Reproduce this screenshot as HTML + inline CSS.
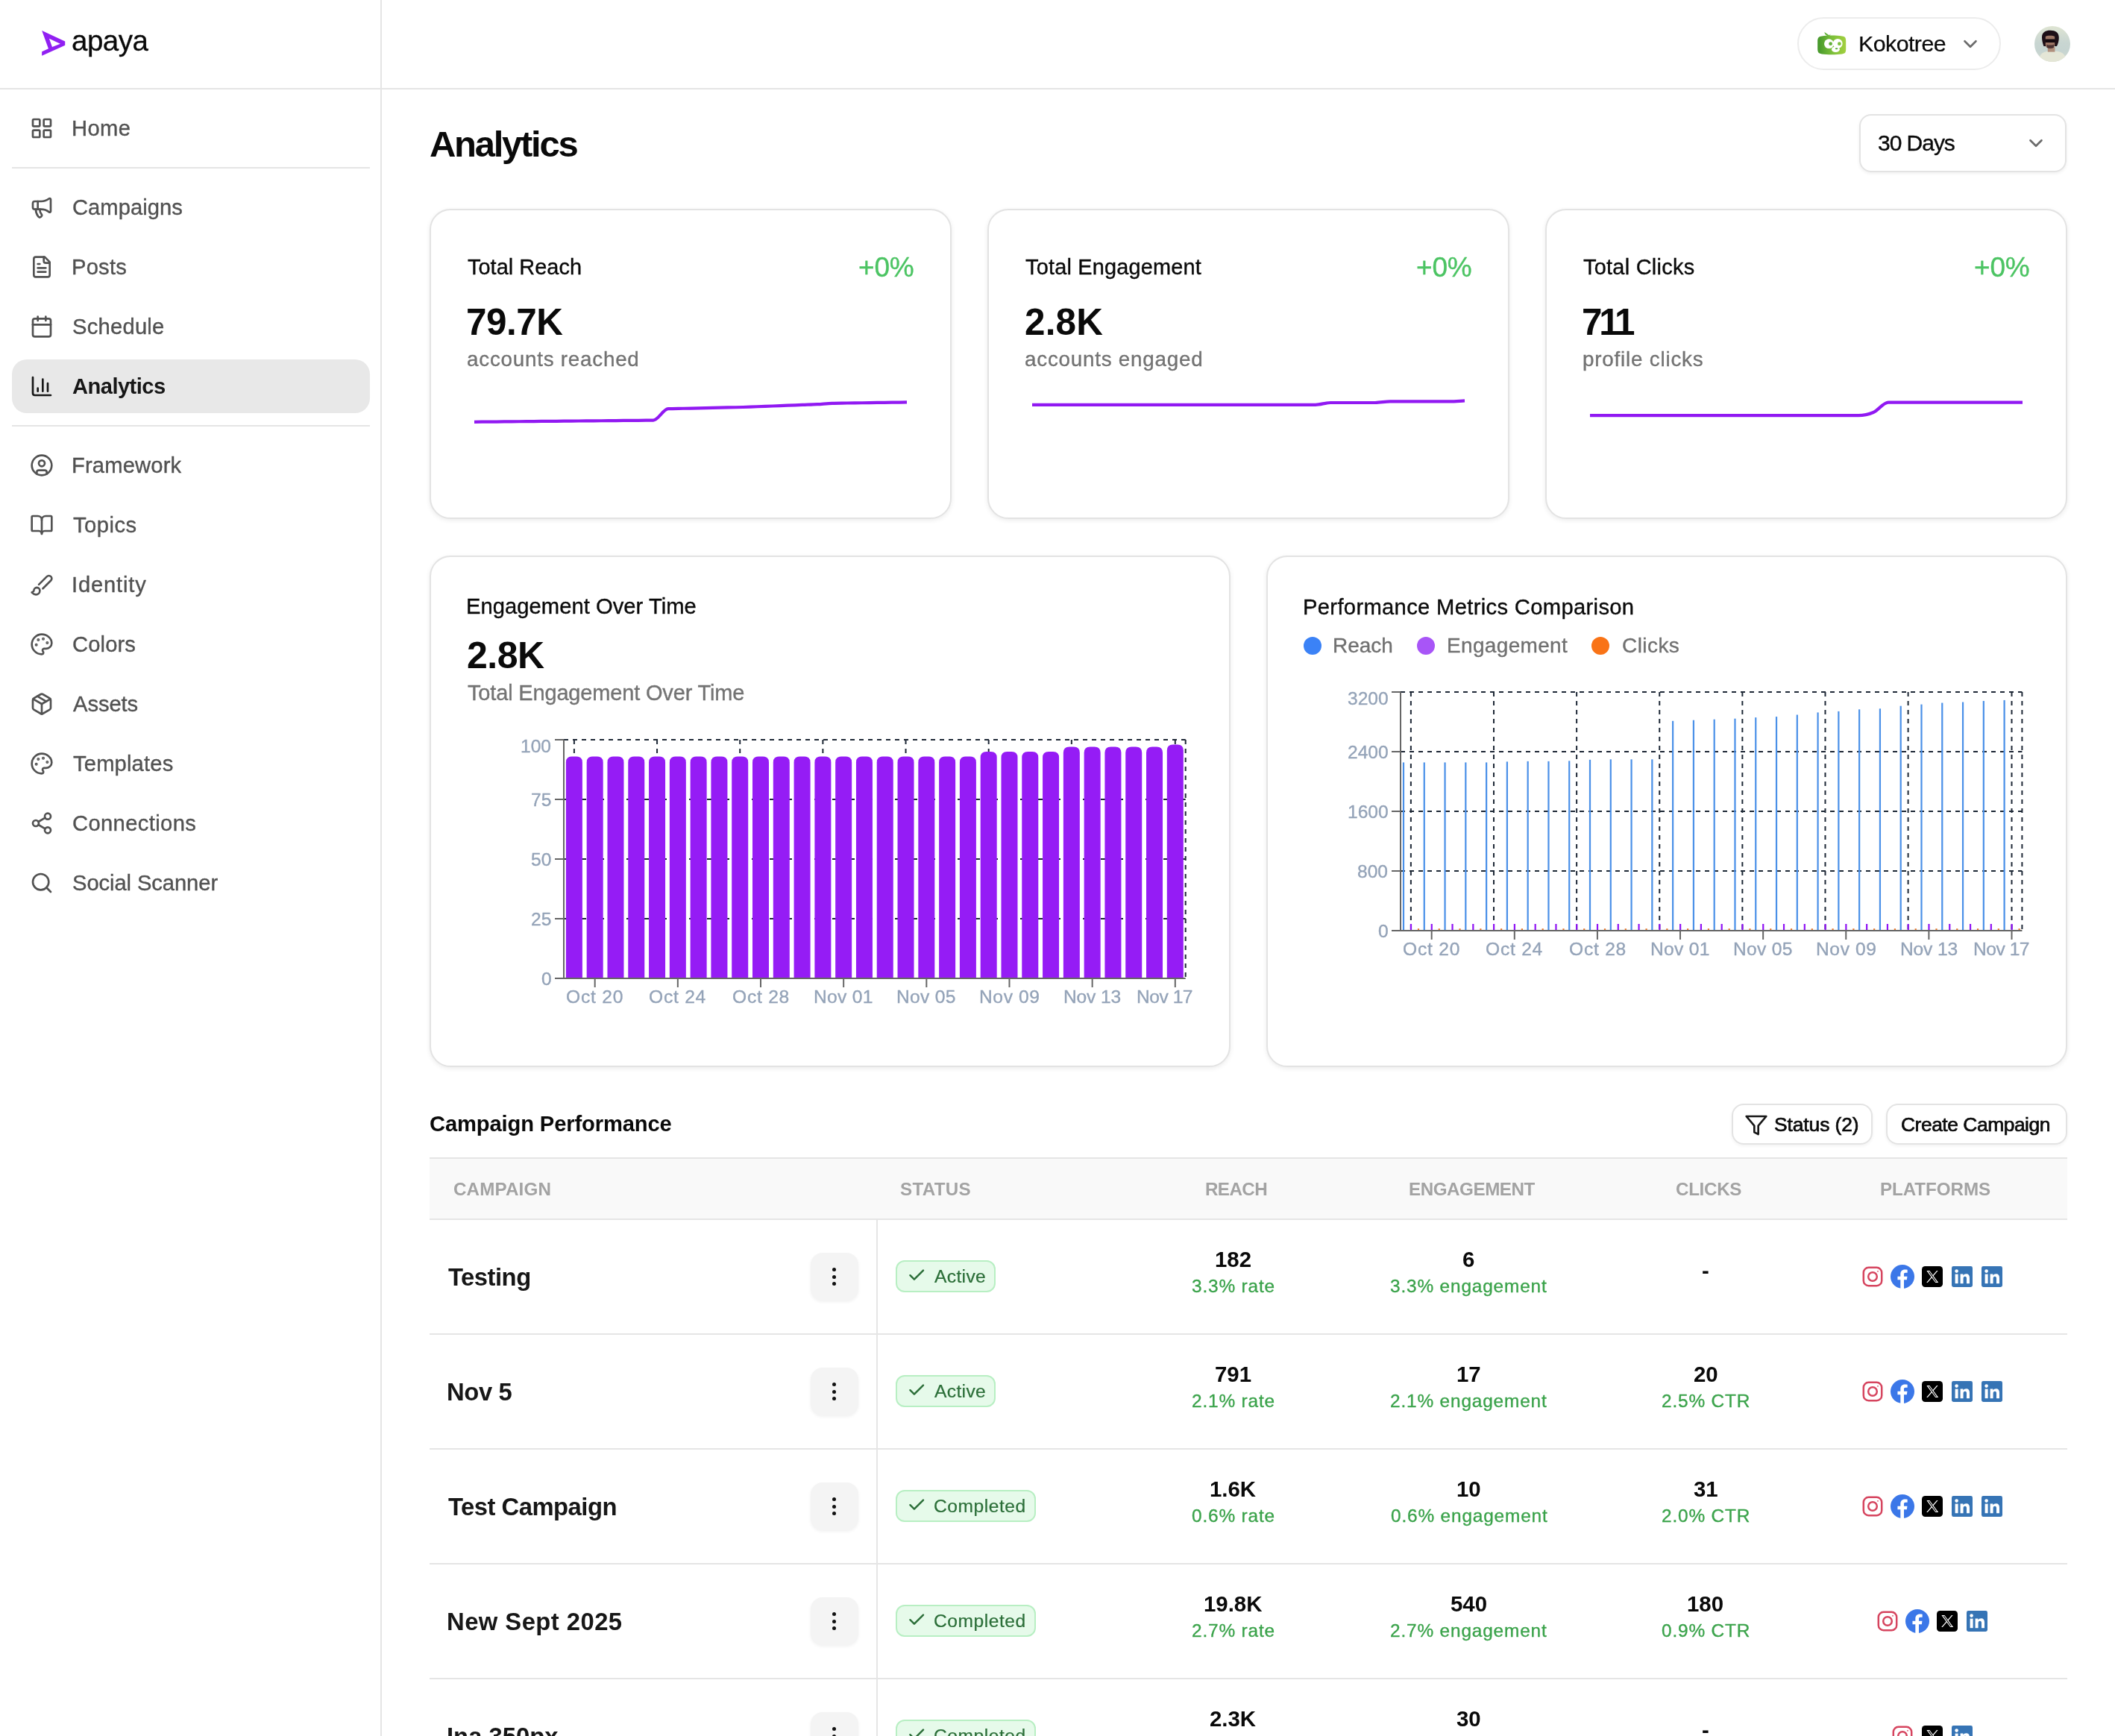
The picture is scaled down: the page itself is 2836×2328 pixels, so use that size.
<!DOCTYPE html>
<html><head><meta charset="utf-8"><title>Analytics</title>
<style>
html,body{margin:0;padding:0;background:#fff;overflow:hidden}
#root{zoom:2;position:relative;width:1418px;height:1164px;overflow:hidden;background:#fff;font-family:'Liberation Sans', sans-serif}
.t{position:absolute;white-space:nowrap;font-family:'Liberation Sans', sans-serif;will-change:transform}
</style></head><body><div id="root">
<div style="position:absolute;left:255px;top:0px;width:1px;height:1164px;background:#e5e5e5"></div>
<div style="position:absolute;left:0px;top:59px;width:1418px;height:1px;background:#e5e5e5"></div>
<svg style="position:absolute;left:0;top:0" width="60" height="60" viewBox="0 0 60 60"><path fill="#9120f2" fill-rule="evenodd" d="M28.08 20.53 L43.62 27.77 L43.62 30.32 L28.08 37.34 L28.08 34.57 L32.47 32.66 Z M32.98 25.85 L40.43 29.38 L34.98 31.51 Z"/></svg>
<div style="position:absolute;left:8px;top:112px;width:240px;height:1px;background:#e5e5e5"></div>
<div style="position:absolute;left:8px;top:285px;width:240px;height:1px;background:#e5e5e5"></div>
<div style="position:absolute;left:8px;top:241px;width:240px;height:36px;background:#e8e8e8;border-radius:10px"></div>
<svg style="position:absolute;left:20px;top:78px" width="16" height="16" viewBox="0 0 24 24" fill="none" stroke="#525252" stroke-width="2" stroke-linecap="round" stroke-linejoin="round" color="#525252" ><rect width="7" height="7" x="3" y="3" rx="1"/><rect width="7" height="7" x="14" y="3" rx="1"/><rect width="7" height="7" x="14" y="14" rx="1"/><rect width="7" height="7" x="3" y="14" rx="1"/></svg>
<svg style="position:absolute;left:20px;top:131px" width="16" height="16" viewBox="0 0 24 24" fill="none" stroke="#525252" stroke-width="2" stroke-linecap="round" stroke-linejoin="round" color="#525252" ><path d="M11 6a13 13 0 0 0 8.4-2.8A1 1 0 0 1 21 4v12a1 1 0 0 1-1.6.8A13 13 0 0 0 11 14H5a2 2 0 0 1-2-2V8a2 2 0 0 1 2-2z"/><path d="M6 14a12 12 0 0 0 2.4 7.2 2 2 0 0 0 3.2-2.4A8 8 0 0 1 10 14"/><path d="M8 6v8"/></svg>
<svg style="position:absolute;left:20px;top:171px" width="16" height="16" viewBox="0 0 24 24" fill="none" stroke="#525252" stroke-width="2" stroke-linecap="round" stroke-linejoin="round" color="#525252" ><path d="M15 2H6a2 2 0 0 0-2 2v16a2 2 0 0 0 2 2h12a2 2 0 0 0 2-2V7Z"/><path d="M14 2v4a2 2 0 0 0 2 2h4"/><path d="M10 9H8"/><path d="M16 13H8"/><path d="M16 17H8"/></svg>
<svg style="position:absolute;left:20px;top:211px" width="16" height="16" viewBox="0 0 24 24" fill="none" stroke="#525252" stroke-width="2" stroke-linecap="round" stroke-linejoin="round" color="#525252" ><path d="M8 2v4"/><path d="M16 2v4"/><rect width="18" height="18" x="3" y="4" rx="2"/><path d="M3 10h18"/></svg>
<svg style="position:absolute;left:20px;top:251px" width="16" height="16" viewBox="0 0 24 24" fill="none" stroke="#171717" stroke-width="2" stroke-linecap="round" stroke-linejoin="round" color="#171717" ><path d="M3 3v16a2 2 0 0 0 2 2h16"/><path d="M18 17V9"/><path d="M13 17V5"/><path d="M8 17v-3"/></svg>
<svg style="position:absolute;left:20px;top:304px" width="16" height="16" viewBox="0 0 24 24" fill="none" stroke="#525252" stroke-width="2" stroke-linecap="round" stroke-linejoin="round" color="#525252" ><circle cx="12" cy="12" r="10"/><circle cx="12" cy="10" r="3"/><path d="M7 20.662V19a2 2 0 0 1 2-2h6a2 2 0 0 1 2 2v1.662"/></svg>
<svg style="position:absolute;left:20px;top:344px" width="16" height="16" viewBox="0 0 24 24" fill="none" stroke="#525252" stroke-width="2" stroke-linecap="round" stroke-linejoin="round" color="#525252" ><path d="M12 7v14"/><path d="M3 18a1 1 0 0 1-1-1V4a1 1 0 0 1 1-1h5a4 4 0 0 1 4 4 4 4 0 0 1 4-4h5a1 1 0 0 1 1 1v13a1 1 0 0 1-1 1h-6a3 3 0 0 0-3 3 3 3 0 0 0-3-3z"/></svg>
<svg style="position:absolute;left:20px;top:384px" width="16" height="16" viewBox="0 0 24 24" fill="none" stroke="#525252" stroke-width="2" stroke-linecap="round" stroke-linejoin="round" color="#525252" ><path d="m9.06 11.9 8.07-8.06a2.85 2.85 0 1 1 4.03 4.03l-8.06 8.08"/><path d="M7.07 14.94c-1.66 0-3 1.35-3 3.02 0 1.33-2.5 1.52-2 2.02 1.08 1.1 2.49 2.02 4 2.02 2.2 0 4-1.8 4-4.04a3.01 3.01 0 0 0-3-3.02z"/></svg>
<svg style="position:absolute;left:20px;top:424px" width="16" height="16" viewBox="0 0 24 24" fill="none" stroke="#525252" stroke-width="2" stroke-linecap="round" stroke-linejoin="round" color="#525252" ><circle cx="13.5" cy="6.5" r=".5" fill="currentColor"/><circle cx="17.5" cy="10.5" r=".5" fill="currentColor"/><circle cx="8.5" cy="7.5" r=".5" fill="currentColor"/><circle cx="6.5" cy="12.5" r=".5" fill="currentColor"/><path d="M12 2C6.5 2 2 6.5 2 12s4.5 10 10 10c.926 0 1.648-.746 1.648-1.688 0-.437-.18-.835-.437-1.125-.29-.289-.438-.652-.438-1.125a1.64 1.64 0 0 1 1.668-1.668h1.996c3.051 0 5.555-2.503 5.555-5.554C21.965 6.012 17.461 2 12 2z"/></svg>
<svg style="position:absolute;left:20px;top:464px" width="16" height="16" viewBox="0 0 24 24" fill="none" stroke="#525252" stroke-width="2" stroke-linecap="round" stroke-linejoin="round" color="#525252" ><path d="M11 21.73a2 2 0 0 0 2 0l7-4A2 2 0 0 0 21 16V8a2 2 0 0 0-1-1.73l-7-4a2 2 0 0 0-2 0l-7 4A2 2 0 0 0 3 8v8a2 2 0 0 0 1 1.73z"/><path d="M12 22V12"/><path d="m3.3 7 8.7 5 8.7-5"/><path d="m7.5 4.27 9 5.15"/></svg>
<svg style="position:absolute;left:20px;top:504px" width="16" height="16" viewBox="0 0 24 24" fill="none" stroke="#525252" stroke-width="2" stroke-linecap="round" stroke-linejoin="round" color="#525252" ><circle cx="13.5" cy="6.5" r=".5" fill="currentColor"/><circle cx="17.5" cy="10.5" r=".5" fill="currentColor"/><circle cx="8.5" cy="7.5" r=".5" fill="currentColor"/><circle cx="6.5" cy="12.5" r=".5" fill="currentColor"/><path d="M12 2C6.5 2 2 6.5 2 12s4.5 10 10 10c.926 0 1.648-.746 1.648-1.688 0-.437-.18-.835-.437-1.125-.29-.289-.438-.652-.438-1.125a1.64 1.64 0 0 1 1.668-1.668h1.996c3.051 0 5.555-2.503 5.555-5.554C21.965 6.012 17.461 2 12 2z"/></svg>
<svg style="position:absolute;left:20px;top:544px" width="16" height="16" viewBox="0 0 24 24" fill="none" stroke="#525252" stroke-width="2" stroke-linecap="round" stroke-linejoin="round" color="#525252" ><circle cx="18" cy="5" r="3"/><circle cx="6" cy="12" r="3"/><circle cx="18" cy="19" r="3"/><line x1="8.59" x2="15.42" y1="13.51" y2="17.49"/><line x1="15.41" x2="8.59" y1="6.51" y2="10.49"/></svg>
<svg style="position:absolute;left:20px;top:584px" width="16" height="16" viewBox="0 0 24 24" fill="none" stroke="#525252" stroke-width="2" stroke-linecap="round" stroke-linejoin="round" color="#525252" ><circle cx="11" cy="11" r="8"/><path d="m21 21-4.3-4.3"/></svg>
<div style="position:absolute;left:1205.1px;top:11.6px;width:136.3px;height:35.6px;border:1px solid #ececec;border-radius:999px;box-sizing:border-box"></div>
<svg style="position:absolute;left:1217px;top:20px" width="22" height="18" viewBox="0 0 22 18"><defs><linearGradient id="kg" x1="0" y1="0" x2="1" y2="0"><stop offset="0" stop-color="#43962a"/><stop offset="0.5" stop-color="#7bbf3a"/><stop offset="1" stop-color="#a3d03f"/></linearGradient></defs><path d="M6.2 1.5 C6.3 3 7.3 3.8 8.4 4.1 L9.6 4.1 C9.9 3.5 10.3 3 10.8 2.6 L9.3 3.6 Z" fill="#62b13a"/><path d="M4.5 4.2 C8 3.6 14 3.6 18 4.2 C20 4.4 20.6 5.2 20.6 7.5 L20.6 12.8 C20.6 15.3 20 16 18 16.2 C14 16.7 8 16.7 4.5 16.2 C2.5 16 1.6 15.3 1.6 12.8 L1.6 7.5 C1.6 5.2 2.5 4.4 4.5 4.2 Z" fill="url(#kg)"/><circle cx="9.2" cy="9.35" r="3.2" fill="#fff"/><circle cx="15.1" cy="9.2" r="3.2" fill="#fff"/><ellipse cx="13.7" cy="13.1" rx="2.7" ry="1.9" fill="#fff"/><circle cx="10.3" cy="9.35" r="1.2" fill="#62b13a"/><circle cx="16.2" cy="9.35" r="1.2" fill="#7cc03c"/><ellipse cx="14.3" cy="12.6" rx="0.9" ry="0.5" fill="#55a834"/></svg>
<svg style="position:absolute;left:1313.5px;top:22.1px" width="15" height="15" viewBox="0 0 24 24" fill="none" stroke="#6b6b6b" stroke-width="2.1" stroke-linecap="round" stroke-linejoin="round" color="#6b6b6b" ><path d="m6 9 6 6 6-6"/></svg>
<svg style="position:absolute;left:1364px;top:17.5px" width="24" height="24" viewBox="0 0 24 24"><defs><clipPath id="avc"><circle cx="12" cy="12" r="12"/></clipPath><linearGradient id="avg" x1="0" y1="0" x2="0" y2="1"><stop offset="0" stop-color="#dfe5d3"/><stop offset="0.45" stop-color="#c9d6d2"/><stop offset="0.7" stop-color="#c6d4d1"/><stop offset="1" stop-color="#d5dcd0"/></linearGradient></defs><g clip-path="url(#avc)"><rect width="24" height="24" fill="url(#avg)"/><path d="M3 24 C3 18 6 16.8 12 16.6 C18 16.8 21 18 21.5 24 Z" fill="#e4e6d6"/><rect x="8.9" y="14" width="4.8" height="3.3" fill="#b08f7c"/><path d="M5 7.5 C5 3.8 8 2.8 10.8 2.9 C14 2.9 16.4 4.3 16.4 7.8 C16.4 10 15.8 12 15 13.5 L6.2 13.5 C5.5 11.5 5 9.5 5 7.5 Z" fill="#1d0f17"/><path d="M7.4 7 C8 6.2 12.5 6 13.6 7 L13.6 12.8 C13.3 14.6 12.2 15.2 10.5 15.2 C8.8 15.2 7.6 14.4 7.4 12.8 Z" fill="#9c7565"/><rect x="7.1" y="8.8" width="6.8" height="2.2" rx="0.6" fill="#140a10"/><path d="M8.2 12.2 C9 13 12 13 13 12.2 L13 14.2 C12.4 15.1 9 15.1 8.3 14.2 Z" fill="#4a3232"/></g></svg>
<div style="position:absolute;left:1246.5px;top:76.3px;width:139px;height:39px;border:1px solid #e3e3e3;border-radius:8px;box-sizing:border-box;box-shadow:0 1px 2px rgba(0,0,0,.06)"></div>
<svg style="position:absolute;left:1357.5px;top:88.4px" width="15" height="15" viewBox="0 0 24 24" fill="none" stroke="#6b6b6b" stroke-width="2.1" stroke-linecap="round" stroke-linejoin="round" color="#6b6b6b" ><path d="m6 9 6 6 6-6"/></svg>
<div style="position:absolute;left:288px;top:140px;width:350px;height:208px;background:#fff;border:1px solid #e3e3e3;border-radius:14px;box-sizing:border-box;box-shadow:0 1px 3px rgba(0,0,0,.08)"></div>
<div style="position:absolute;left:662px;top:140px;width:350px;height:208px;background:#fff;border:1px solid #e3e3e3;border-radius:14px;box-sizing:border-box;box-shadow:0 1px 3px rgba(0,0,0,.08)"></div>
<div style="position:absolute;left:1036px;top:140px;width:350px;height:208px;background:#fff;border:1px solid #e3e3e3;border-radius:14px;box-sizing:border-box;box-shadow:0 1px 3px rgba(0,0,0,.08)"></div>
<svg style="position:absolute;left:0;top:0" width="1418" height="400" viewBox="0 0 1418 400"><path d="M318.00,282.90 C321.33,282.87 324.67,282.84 328.00,282.81 C331.33,282.78 334.67,282.75 338.00,282.72 C341.33,282.69 344.67,282.66 348.00,282.62 C351.33,282.59 354.67,282.56 358.00,282.53 C361.33,282.50 364.67,282.47 368.00,282.44 C371.33,282.41 374.67,282.38 378.00,282.35 C381.33,282.32 384.67,282.29 388.00,282.26 C391.33,282.23 394.67,282.20 398.00,282.17 C401.33,282.14 404.67,282.11 408.00,282.07 C411.33,282.04 414.67,282.01 418.00,281.98 C421.33,281.95 424.67,281.92 428.00,281.89 C431.33,281.86 434.67,281.86 438.00,281.80 C441.33,281.74 444.67,274.25 448.00,274.10 C451.33,273.95 454.67,273.95 458.00,273.88 C461.33,273.81 464.67,273.73 468.00,273.66 C471.33,273.59 474.67,273.51 478.00,273.44 C481.33,273.37 484.67,273.29 488.00,273.22 C491.33,273.15 494.67,273.10 498.00,273.00 C501.33,272.90 504.67,272.75 508.00,272.62 C511.33,272.49 514.67,272.37 518.00,272.24 C521.33,272.11 524.67,271.99 528.00,271.86 C531.33,271.73 534.67,271.61 538.00,271.48 C541.33,271.35 544.67,271.28 548.00,271.10 C551.33,270.92 554.67,270.49 558.00,270.40 C561.33,270.31 564.67,270.31 568.00,270.26 C571.33,270.21 574.67,270.17 578.00,270.12 C581.33,270.07 584.67,270.03 588.00,269.98 C591.33,269.93 594.67,269.89 598.00,269.84 C601.33,269.79 604.67,269.75 608.00,269.70" fill="none" stroke="#9119f2" stroke-width="2.1" stroke-linejoin="round" stroke-linecap="butt"/><path d="M692.00,271.40 C695.33,271.40 698.67,271.40 702.00,271.40 C705.33,271.40 708.67,271.40 712.00,271.40 C715.33,271.40 718.67,271.40 722.00,271.40 C725.33,271.40 728.67,271.40 732.00,271.40 C735.33,271.40 738.67,271.40 742.00,271.40 C745.33,271.40 748.67,271.40 752.00,271.40 C755.33,271.40 758.67,271.40 762.00,271.40 C765.33,271.40 768.67,271.40 772.00,271.40 C775.33,271.40 778.67,271.40 782.00,271.40 C785.33,271.40 788.67,271.40 792.00,271.40 C795.33,271.40 798.67,271.40 802.00,271.40 C805.33,271.40 808.67,271.40 812.00,271.40 C815.33,271.40 818.67,271.40 822.00,271.40 C825.33,271.40 828.67,271.40 832.00,271.40 C835.33,271.40 838.67,271.40 842.00,271.40 C845.33,271.40 848.67,271.40 852.00,271.40 C855.33,271.40 858.67,271.40 862.00,271.40 C865.33,271.40 868.67,271.40 872.00,271.40 C875.33,271.40 878.67,271.40 882.00,271.40 C885.33,271.40 888.67,270.00 892.00,270.00 C895.33,270.00 898.67,270.00 902.00,270.00 C905.33,270.00 908.67,270.00 912.00,270.00 C915.33,270.00 918.67,270.00 922.00,270.00 C925.33,270.00 928.67,269.20 932.00,269.20 C935.33,269.20 938.67,269.20 942.00,269.20 C945.33,269.20 948.67,269.20 952.00,269.20 C955.33,269.20 958.67,269.20 962.00,269.20 C965.33,269.20 968.67,269.20 972.00,269.20 C975.33,269.20 978.67,268.87 982.00,268.70" fill="none" stroke="#9119f2" stroke-width="2.1" stroke-linejoin="round" stroke-linecap="butt"/><path d="M1066.00,278.60 C1069.33,278.60 1072.67,278.60 1076.00,278.60 C1079.33,278.60 1082.67,278.60 1086.00,278.60 C1089.33,278.60 1092.67,278.60 1096.00,278.60 C1099.33,278.60 1102.67,278.60 1106.00,278.60 C1109.33,278.60 1112.67,278.60 1116.00,278.60 C1119.33,278.60 1122.67,278.60 1126.00,278.60 C1129.33,278.60 1132.67,278.60 1136.00,278.60 C1139.33,278.60 1142.67,278.60 1146.00,278.60 C1149.33,278.60 1152.67,278.60 1156.00,278.60 C1159.33,278.60 1162.67,278.60 1166.00,278.60 C1169.33,278.60 1172.67,278.60 1176.00,278.60 C1179.33,278.60 1182.67,278.60 1186.00,278.60 C1189.33,278.60 1192.67,278.60 1196.00,278.60 C1199.33,278.60 1202.67,278.60 1206.00,278.60 C1209.33,278.60 1212.67,278.60 1216.00,278.60 C1219.33,278.60 1222.67,278.60 1226.00,278.60 C1229.33,278.60 1232.67,278.60 1236.00,278.60 C1239.33,278.60 1242.67,278.60 1246.00,278.60 C1249.33,278.60 1252.67,277.90 1256.00,276.50 C1259.33,275.10 1262.67,269.80 1266.00,269.80 C1269.33,269.80 1272.67,269.80 1276.00,269.80 C1279.33,269.80 1282.67,269.80 1286.00,269.80 C1289.33,269.80 1292.67,269.80 1296.00,269.80 C1299.33,269.80 1302.67,269.80 1306.00,269.80 C1309.33,269.80 1312.67,269.80 1316.00,269.80 C1319.33,269.80 1322.67,269.80 1326.00,269.80 C1329.33,269.80 1332.67,269.80 1336.00,269.80 C1339.33,269.80 1342.67,269.80 1346.00,269.80 C1349.33,269.80 1352.67,269.80 1356.00,269.80" fill="none" stroke="#9119f2" stroke-width="2.1" stroke-linejoin="round" stroke-linecap="butt"/></svg>
<div style="position:absolute;left:288px;top:372.6px;width:537px;height:342.7px;background:#fff;border:1px solid #e3e3e3;border-radius:14px;box-sizing:border-box;box-shadow:0 1px 3px rgba(0,0,0,.08)"></div>
<div style="position:absolute;left:849px;top:372.6px;width:537px;height:342.7px;background:#fff;border:1px solid #e3e3e3;border-radius:14px;box-sizing:border-box;box-shadow:0 1px 3px rgba(0,0,0,.08)"></div>
<div style="position:absolute;left:873.95px;top:426.9px;width:12px;height:12px;border-radius:50%;background:#3b82f6"></div>
<div style="position:absolute;left:949.9px;top:426.9px;width:12px;height:12px;border-radius:50%;background:#a855f7"></div>
<div style="position:absolute;left:1067px;top:426.9px;width:12px;height:12px;border-radius:50%;background:#f97316"></div>
<svg style="position:absolute;left:0;top:0;overflow:visible" width="1418" height="1164" viewBox="0 0 1418 1164"><line x1="378" x2="794.85" y1="616.0" y2="616.0" stroke="#1f2937" stroke-dasharray="3 3" stroke-width="1"/><line x1="378" x2="794.85" y1="576.0" y2="576.0" stroke="#1f2937" stroke-dasharray="3 3" stroke-width="1"/><line x1="378" x2="794.85" y1="536.0" y2="536.0" stroke="#1f2937" stroke-dasharray="3 3" stroke-width="1"/><line x1="378" x2="794.85" y1="496.0" y2="496.0" stroke="#1f2937" stroke-dasharray="3 3" stroke-width="1"/><line x1="384.9475" x2="384.9475" y1="496" y2="656" stroke="#1f2937" stroke-dasharray="3 3" stroke-width="1"/><line x1="440.52750000000003" x2="440.52750000000003" y1="496" y2="656" stroke="#1f2937" stroke-dasharray="3 3" stroke-width="1"/><line x1="496.1075" x2="496.1075" y1="496" y2="656" stroke="#1f2937" stroke-dasharray="3 3" stroke-width="1"/><line x1="551.6875" x2="551.6875" y1="496" y2="656" stroke="#1f2937" stroke-dasharray="3 3" stroke-width="1"/><line x1="607.2675" x2="607.2675" y1="496" y2="656" stroke="#1f2937" stroke-dasharray="3 3" stroke-width="1"/><line x1="662.8475000000001" x2="662.8475000000001" y1="496" y2="656" stroke="#1f2937" stroke-dasharray="3 3" stroke-width="1"/><line x1="718.4275" x2="718.4275" y1="496" y2="656" stroke="#1f2937" stroke-dasharray="3 3" stroke-width="1"/><line x1="787.9025" x2="787.9025" y1="496" y2="656" stroke="#1f2937" stroke-dasharray="3 3" stroke-width="1"/><line x1="794.85" x2="794.85" y1="496" y2="656" stroke="#1f2937" stroke-dasharray="3 3" stroke-width="1"/><path d="M379.4475,656 V511.2 Q379.4475,507.2 383.4475,507.2 H386.4475 Q390.4475,507.2 390.4475,511.2 V656 Z" fill="#951cf5"/><path d="M393.3425,656 V511.2 Q393.3425,507.2 397.3425,507.2 H400.3425 Q404.3425,507.2 404.3425,511.2 V656 Z" fill="#951cf5"/><path d="M407.2375,656 V511.2 Q407.2375,507.2 411.2375,507.2 H414.2375 Q418.2375,507.2 418.2375,511.2 V656 Z" fill="#951cf5"/><path d="M421.1325,656 V511.2 Q421.1325,507.2 425.1325,507.2 H428.1325 Q432.1325,507.2 432.1325,511.2 V656 Z" fill="#951cf5"/><path d="M435.02750000000003,656 V511.2 Q435.02750000000003,507.2 439.02750000000003,507.2 H442.02750000000003 Q446.02750000000003,507.2 446.02750000000003,511.2 V656 Z" fill="#951cf5"/><path d="M448.9225,656 V511.2 Q448.9225,507.2 452.9225,507.2 H455.9225 Q459.9225,507.2 459.9225,511.2 V656 Z" fill="#951cf5"/><path d="M462.8175,656 V511.2 Q462.8175,507.2 466.8175,507.2 H469.8175 Q473.8175,507.2 473.8175,511.2 V656 Z" fill="#951cf5"/><path d="M476.7125,656 V511.2 Q476.7125,507.2 480.7125,507.2 H483.7125 Q487.7125,507.2 487.7125,511.2 V656 Z" fill="#951cf5"/><path d="M490.6075,656 V511.2 Q490.6075,507.2 494.6075,507.2 H497.6075 Q501.6075,507.2 501.6075,511.2 V656 Z" fill="#951cf5"/><path d="M504.50250000000005,656 V511.2 Q504.50250000000005,507.2 508.50250000000005,507.2 H511.50250000000005 Q515.5025,507.2 515.5025,511.2 V656 Z" fill="#951cf5"/><path d="M518.3975,656 V511.2 Q518.3975,507.2 522.3975,507.2 H525.3975 Q529.3975,507.2 529.3975,511.2 V656 Z" fill="#951cf5"/><path d="M532.2925,656 V511.2 Q532.2925,507.2 536.2925,507.2 H539.2925 Q543.2925,507.2 543.2925,511.2 V656 Z" fill="#951cf5"/><path d="M546.1875,656 V511.2 Q546.1875,507.2 550.1875,507.2 H553.1875 Q557.1875,507.2 557.1875,511.2 V656 Z" fill="#951cf5"/><path d="M560.0825,656 V511.2 Q560.0825,507.2 564.0825,507.2 H567.0825 Q571.0825,507.2 571.0825,511.2 V656 Z" fill="#951cf5"/><path d="M573.9775,656 V511.2 Q573.9775,507.2 577.9775,507.2 H580.9775 Q584.9775,507.2 584.9775,511.2 V656 Z" fill="#951cf5"/><path d="M587.8725000000001,656 V511.2 Q587.8725000000001,507.2 591.8725000000001,507.2 H594.8725000000001 Q598.8725000000001,507.2 598.8725000000001,511.2 V656 Z" fill="#951cf5"/><path d="M601.7675,656 V511.2 Q601.7675,507.2 605.7675,507.2 H608.7675 Q612.7675,507.2 612.7675,511.2 V656 Z" fill="#951cf5"/><path d="M615.6625,656 V511.2 Q615.6625,507.2 619.6625,507.2 H622.6625 Q626.6625,507.2 626.6625,511.2 V656 Z" fill="#951cf5"/><path d="M629.5575,656 V511.2 Q629.5575,507.2 633.5575,507.2 H636.5575 Q640.5575,507.2 640.5575,511.2 V656 Z" fill="#951cf5"/><path d="M643.4525000000001,656 V511.2 Q643.4525000000001,507.2 647.4525000000001,507.2 H650.4525000000001 Q654.4525000000001,507.2 654.4525000000001,511.2 V656 Z" fill="#951cf5"/><path d="M657.3475000000001,656 V508.0 Q657.3475000000001,504.0 661.3475000000001,504.0 H664.3475000000001 Q668.3475000000001,504.0 668.3475000000001,508.0 V656 Z" fill="#951cf5"/><path d="M671.2425000000001,656 V508.0 Q671.2425000000001,504.0 675.2425000000001,504.0 H678.2425000000001 Q682.2425000000001,504.0 682.2425000000001,508.0 V656 Z" fill="#951cf5"/><path d="M685.1375,656 V508.0 Q685.1375,504.0 689.1375,504.0 H692.1375 Q696.1375,504.0 696.1375,508.0 V656 Z" fill="#951cf5"/><path d="M699.0325,656 V508.0 Q699.0325,504.0 703.0325,504.0 H706.0325 Q710.0325,504.0 710.0325,508.0 V656 Z" fill="#951cf5"/><path d="M712.9275,656 V504.8 Q712.9275,500.8 716.9275,500.8 H719.9275 Q723.9275,500.8 723.9275,504.8 V656 Z" fill="#951cf5"/><path d="M726.8225,656 V504.8 Q726.8225,500.8 730.8225,500.8 H733.8225 Q737.8225,500.8 737.8225,504.8 V656 Z" fill="#951cf5"/><path d="M740.7175,656 V504.8 Q740.7175,500.8 744.7175,500.8 H747.7175 Q751.7175,500.8 751.7175,504.8 V656 Z" fill="#951cf5"/><path d="M754.6125,656 V504.8 Q754.6125,500.8 758.6125,500.8 H761.6125 Q765.6125,500.8 765.6125,504.8 V656 Z" fill="#951cf5"/><path d="M768.5075,656 V504.8 Q768.5075,500.8 772.5075,500.8 H775.5075 Q779.5075,500.8 779.5075,504.8 V656 Z" fill="#951cf5"/><path d="M782.4025,656 V503.2 Q782.4025,499.2 786.4025,499.2 H789.4025 Q793.4025,499.2 793.4025,503.2 V656 Z" fill="#951cf5"/><line x1="378" x2="378" y1="496" y2="656" stroke="#666666" stroke-width="1"/><line x1="378" x2="794.85" y1="656" y2="656" stroke="#666666" stroke-width="1"/><line x1="372" x2="378" y1="656.0" y2="656.0" stroke="#666666" stroke-width="1"/><line x1="372" x2="378" y1="616.0" y2="616.0" stroke="#666666" stroke-width="1"/><line x1="372" x2="378" y1="576.0" y2="576.0" stroke="#666666" stroke-width="1"/><line x1="372" x2="378" y1="536.0" y2="536.0" stroke="#666666" stroke-width="1"/><line x1="372" x2="378" y1="496.0" y2="496.0" stroke="#666666" stroke-width="1"/><line x1="398.8425" x2="398.8425" y1="656" y2="662" stroke="#666666" stroke-width="1"/><line x1="454.4225" x2="454.4225" y1="656" y2="662" stroke="#666666" stroke-width="1"/><line x1="510.00250000000005" x2="510.00250000000005" y1="656" y2="662" stroke="#666666" stroke-width="1"/><line x1="565.5825" x2="565.5825" y1="656" y2="662" stroke="#666666" stroke-width="1"/><line x1="621.1625" x2="621.1625" y1="656" y2="662" stroke="#666666" stroke-width="1"/><line x1="676.7425000000001" x2="676.7425000000001" y1="656" y2="662" stroke="#666666" stroke-width="1"/><line x1="732.3225" x2="732.3225" y1="656" y2="662" stroke="#666666" stroke-width="1"/><line x1="787.9025" x2="787.9025" y1="656" y2="662" stroke="#666666" stroke-width="1"/></svg>
<svg style="position:absolute;left:0;top:0;overflow:visible" width="1418" height="1164" viewBox="0 0 1418 1164"><line x1="939" x2="1355.7" y1="584.0" y2="584.0" stroke="#1f2937" stroke-dasharray="3 3" stroke-width="1"/><line x1="939" x2="1355.7" y1="544.0" y2="544.0" stroke="#1f2937" stroke-dasharray="3 3" stroke-width="1"/><line x1="939" x2="1355.7" y1="504.0" y2="504.0" stroke="#1f2937" stroke-dasharray="3 3" stroke-width="1"/><line x1="939" x2="1355.7" y1="464.0" y2="464.0" stroke="#1f2937" stroke-dasharray="3 3" stroke-width="1"/><line x1="945.945" x2="945.945" y1="464" y2="624" stroke="#1f2937" stroke-dasharray="3 3" stroke-width="1"/><line x1="1001.505" x2="1001.505" y1="464" y2="624" stroke="#1f2937" stroke-dasharray="3 3" stroke-width="1"/><line x1="1057.065" x2="1057.065" y1="464" y2="624" stroke="#1f2937" stroke-dasharray="3 3" stroke-width="1"/><line x1="1112.625" x2="1112.625" y1="464" y2="624" stroke="#1f2937" stroke-dasharray="3 3" stroke-width="1"/><line x1="1168.185" x2="1168.185" y1="464" y2="624" stroke="#1f2937" stroke-dasharray="3 3" stroke-width="1"/><line x1="1223.7450000000001" x2="1223.7450000000001" y1="464" y2="624" stroke="#1f2937" stroke-dasharray="3 3" stroke-width="1"/><line x1="1279.305" x2="1279.305" y1="464" y2="624" stroke="#1f2937" stroke-dasharray="3 3" stroke-width="1"/><line x1="1348.755" x2="1348.755" y1="464" y2="624" stroke="#1f2937" stroke-dasharray="3 3" stroke-width="1"/><line x1="1355.7" x2="1355.7" y1="464" y2="624" stroke="#1f2937" stroke-dasharray="3 3" stroke-width="1"/><rect x="940.445" y="511.2079983508555" width="1.1" height="112.79200164914448" fill="#4a90e8"/><rect x="945.445" y="619.5" width="1.1" height="4.5" fill="#9013f5"/><rect x="950.445" y="622.6" width="1.1" height="1.4" fill="#f07a2a"/><rect x="954.335" y="511.2079983508555" width="1.1" height="112.79200164914448" fill="#4a90e8"/><rect x="959.335" y="619.5" width="1.1" height="4.5" fill="#9013f5"/><rect x="964.335" y="622.6" width="1.1" height="1.4" fill="#f07a2a"/><rect x="968.225" y="511.2079983508555" width="1.1" height="112.79200164914448" fill="#4a90e8"/><rect x="973.225" y="619.5" width="1.1" height="4.5" fill="#9013f5"/><rect x="978.225" y="622.6" width="1.1" height="1.4" fill="#f07a2a"/><rect x="982.115" y="511.2079983508555" width="1.1" height="112.79200164914448" fill="#4a90e8"/><rect x="987.115" y="619.5" width="1.1" height="4.5" fill="#9013f5"/><rect x="992.115" y="622.6" width="1.1" height="1.4" fill="#f07a2a"/><rect x="996.005" y="511.2079983508555" width="1.1" height="112.79200164914448" fill="#4a90e8"/><rect x="1001.005" y="619.5" width="1.1" height="4.5" fill="#9013f5"/><rect x="1006.005" y="622.6" width="1.1" height="1.4" fill="#f07a2a"/><rect x="1009.895" y="510.6926406926407" width="1.1" height="113.30735930735932" fill="#4a90e8"/><rect x="1014.895" y="619.5" width="1.1" height="4.5" fill="#9013f5"/><rect x="1019.895" y="622.6" width="1.1" height="1.4" fill="#f07a2a"/><rect x="1023.7850000000001" y="510.4349618635333" width="1.1" height="113.56503813646668" fill="#4a90e8"/><rect x="1028.785" y="619.5" width="1.1" height="4.5" fill="#9013f5"/><rect x="1033.785" y="622.6" width="1.1" height="1.4" fill="#f07a2a"/><rect x="1037.675" y="510.4349618635333" width="1.1" height="113.56503813646668" fill="#4a90e8"/><rect x="1042.675" y="619.5" width="1.1" height="4.5" fill="#9013f5"/><rect x="1047.675" y="622.6" width="1.1" height="1.4" fill="#f07a2a"/><rect x="1051.565" y="510.1772830344259" width="1.1" height="113.8227169655741" fill="#4a90e8"/><rect x="1056.565" y="619.5" width="1.1" height="4.5" fill="#9013f5"/><rect x="1061.565" y="622.6" width="1.1" height="1.4" fill="#f07a2a"/><rect x="1065.455" y="509.4042465471037" width="1.1" height="114.5957534528963" fill="#4a90e8"/><rect x="1070.455" y="619.5" width="1.1" height="4.5" fill="#9013f5"/><rect x="1075.455" y="622.6" width="1.1" height="1.4" fill="#f07a2a"/><rect x="1079.345" y="509.1465677179963" width="1.1" height="114.85343228200372" fill="#4a90e8"/><rect x="1084.345" y="619.5" width="1.1" height="4.5" fill="#9013f5"/><rect x="1089.345" y="622.6" width="1.1" height="1.4" fill="#f07a2a"/><rect x="1093.2350000000001" y="509.1465677179963" width="1.1" height="114.85343228200372" fill="#4a90e8"/><rect x="1098.2350000000001" y="619.5" width="1.1" height="4.5" fill="#9013f5"/><rect x="1103.2350000000001" y="622.6" width="1.1" height="1.4" fill="#f07a2a"/><rect x="1107.125" y="509.1465677179963" width="1.1" height="114.85343228200372" fill="#4a90e8"/><rect x="1112.125" y="619.5" width="1.1" height="4.5" fill="#9013f5"/><rect x="1117.125" y="622.6" width="1.1" height="1.4" fill="#f07a2a"/><rect x="1121.015" y="483.37868480725626" width="1.1" height="140.62131519274374" fill="#4a90e8"/><rect x="1126.015" y="619.5" width="1.1" height="4.5" fill="#9013f5"/><rect x="1131.015" y="622.6" width="1.1" height="1.4" fill="#f07a2a"/><rect x="1134.905" y="482.8633271490414" width="1.1" height="141.13667285095858" fill="#4a90e8"/><rect x="1139.905" y="619.5" width="1.1" height="4.5" fill="#9013f5"/><rect x="1144.905" y="622.6" width="1.1" height="1.4" fill="#f07a2a"/><rect x="1148.795" y="482.34796949082664" width="1.1" height="141.65203050917336" fill="#4a90e8"/><rect x="1153.795" y="619.5" width="1.1" height="4.5" fill="#9013f5"/><rect x="1158.795" y="622.6" width="1.1" height="1.4" fill="#f07a2a"/><rect x="1162.685" y="481.83261183261186" width="1.1" height="142.16738816738814" fill="#4a90e8"/><rect x="1167.685" y="619.5" width="1.1" height="4.5" fill="#9013f5"/><rect x="1172.685" y="622.6" width="1.1" height="1.4" fill="#f07a2a"/><rect x="1176.575" y="481.05957534528966" width="1.1" height="142.94042465471034" fill="#4a90e8"/><rect x="1181.575" y="619.5" width="1.1" height="4.5" fill="#9013f5"/><rect x="1186.575" y="622.6" width="1.1" height="1.4" fill="#f07a2a"/><rect x="1190.4650000000001" y="480.5442176870748" width="1.1" height="143.45578231292518" fill="#4a90e8"/><rect x="1195.4650000000001" y="619.5" width="1.1" height="4.5" fill="#9013f5"/><rect x="1200.4650000000001" y="622.6" width="1.1" height="1.4" fill="#f07a2a"/><rect x="1204.355" y="479.25582354153784" width="1.1" height="144.74417645846216" fill="#4a90e8"/><rect x="1209.355" y="619.5" width="1.1" height="4.5" fill="#9013f5"/><rect x="1214.355" y="622.6" width="1.1" height="1.4" fill="#f07a2a"/><rect x="1218.2450000000001" y="477.70975056689343" width="1.1" height="146.29024943310657" fill="#4a90e8"/><rect x="1223.2450000000001" y="619.5" width="1.1" height="4.5" fill="#9013f5"/><rect x="1228.2450000000001" y="622.6" width="1.1" height="1.4" fill="#f07a2a"/><rect x="1232.135" y="476.93671407957123" width="1.1" height="147.06328592042877" fill="#4a90e8"/><rect x="1237.135" y="619.5" width="1.1" height="4.5" fill="#9013f5"/><rect x="1242.135" y="622.6" width="1.1" height="1.4" fill="#f07a2a"/><rect x="1246.025" y="475.64831993403425" width="1.1" height="148.35168006596575" fill="#4a90e8"/><rect x="1251.025" y="619.5" width="1.1" height="4.5" fill="#9013f5"/><rect x="1256.025" y="622.6" width="1.1" height="1.4" fill="#f07a2a"/><rect x="1259.915" y="475.1329622758194" width="1.1" height="148.8670377241806" fill="#4a90e8"/><rect x="1264.915" y="619.5" width="1.1" height="4.5" fill="#9013f5"/><rect x="1269.915" y="622.6" width="1.1" height="1.4" fill="#f07a2a"/><rect x="1273.805" y="473.32921047206764" width="1.1" height="150.67078952793236" fill="#4a90e8"/><rect x="1278.805" y="619.5" width="1.1" height="4.5" fill="#9013f5"/><rect x="1283.805" y="622.6" width="1.1" height="1.4" fill="#f07a2a"/><rect x="1287.6950000000002" y="472.298495155638" width="1.1" height="151.70150484436198" fill="#4a90e8"/><rect x="1292.6950000000002" y="619.5" width="1.1" height="4.5" fill="#9013f5"/><rect x="1297.6950000000002" y="622.6" width="1.1" height="1.4" fill="#f07a2a"/><rect x="1301.585" y="471.2677798392084" width="1.1" height="152.7322201607916" fill="#4a90e8"/><rect x="1306.585" y="619.5" width="1.1" height="4.5" fill="#9013f5"/><rect x="1311.585" y="622.6" width="1.1" height="1.4" fill="#f07a2a"/><rect x="1315.4750000000001" y="470.7524221809936" width="1.1" height="153.24757781900638" fill="#4a90e8"/><rect x="1320.4750000000001" y="619.5" width="1.1" height="4.5" fill="#9013f5"/><rect x="1325.4750000000001" y="622.6" width="1.1" height="1.4" fill="#f07a2a"/><rect x="1329.365" y="469.9793856936714" width="1.1" height="154.02061430632858" fill="#4a90e8"/><rect x="1334.365" y="619.5" width="1.1" height="4.5" fill="#9013f5"/><rect x="1339.365" y="622.6" width="1.1" height="1.4" fill="#f07a2a"/><rect x="1343.255" y="469.46402803545664" width="1.1" height="154.53597196454336" fill="#4a90e8"/><rect x="1348.255" y="619.5" width="1.1" height="4.5" fill="#9013f5"/><rect x="1353.255" y="622.6" width="1.1" height="1.4" fill="#f07a2a"/><line x1="939" x2="939" y1="464" y2="624" stroke="#666666" stroke-width="1"/><line x1="939" x2="1355.7" y1="624" y2="624" stroke="#666666" stroke-width="1"/><line x1="933" x2="939" y1="624.0" y2="624.0" stroke="#666666" stroke-width="1"/><line x1="933" x2="939" y1="584.0" y2="584.0" stroke="#666666" stroke-width="1"/><line x1="933" x2="939" y1="544.0" y2="544.0" stroke="#666666" stroke-width="1"/><line x1="933" x2="939" y1="504.0" y2="504.0" stroke="#666666" stroke-width="1"/><line x1="933" x2="939" y1="464.0" y2="464.0" stroke="#666666" stroke-width="1"/><line x1="959.835" x2="959.835" y1="624" y2="630" stroke="#666666" stroke-width="1"/><line x1="1015.395" x2="1015.395" y1="624" y2="630" stroke="#666666" stroke-width="1"/><line x1="1070.955" x2="1070.955" y1="624" y2="630" stroke="#666666" stroke-width="1"/><line x1="1126.515" x2="1126.515" y1="624" y2="630" stroke="#666666" stroke-width="1"/><line x1="1182.075" x2="1182.075" y1="624" y2="630" stroke="#666666" stroke-width="1"/><line x1="1237.635" x2="1237.635" y1="624" y2="630" stroke="#666666" stroke-width="1"/><line x1="1293.1950000000002" x2="1293.1950000000002" y1="624" y2="630" stroke="#666666" stroke-width="1"/><line x1="1348.755" x2="1348.755" y1="624" y2="630" stroke="#666666" stroke-width="1"/></svg>
<div style="position:absolute;left:1161px;top:740.2px;width:94.5px;height:27.4px;border:1px solid #e3e3e3;border-radius:8px;box-sizing:border-box;box-shadow:0 1px 2px rgba(0,0,0,.05)"></div>
<svg style="position:absolute;left:1169.5px;top:746.3px" width="16" height="16" viewBox="0 0 24 24" fill="none" stroke="#171717" stroke-width="2" stroke-linecap="round" stroke-linejoin="round" color="#171717" ><polygon points="22 3 2 3 10 12.46 10 19 14 21 14 12.46 22 3"/></svg>
<div style="position:absolute;left:1264.4px;top:740.2px;width:121.4px;height:27.4px;border:1px solid #e3e3e3;border-radius:8px;box-sizing:border-box;box-shadow:0 1px 2px rgba(0,0,0,.05)"></div>
<div style="position:absolute;left:288px;top:776px;width:1098px;height:42px;background:#f9f9f9;border-top:1px solid #e5e5e5;border-bottom:1px solid #e5e5e5;box-sizing:border-box"></div>
<div style="position:absolute;left:587.5px;top:818px;width:1px;height:346px;background:#e5e5e5"></div>
<div style="position:absolute;left:288px;top:894px;width:1098px;height:1px;background:#e5e5e5"></div>
<div style="position:absolute;left:543.5px;top:840.2px;width:32px;height:32px;background:#f4f4f4;border-radius:8px;box-shadow:0 1px 2px rgba(0,0,0,.06)"></div>
<div style="position:absolute;left:558.05px;top:849.9499999999999px;width:2.7px;height:2.7px;border-radius:50%;background:#111"></div>
<div style="position:absolute;left:558.05px;top:854.75px;width:2.7px;height:2.7px;border-radius:50%;background:#111"></div>
<div style="position:absolute;left:558.05px;top:859.4499999999999px;width:2.7px;height:2.7px;border-radius:50%;background:#111"></div>
<div style="position:absolute;left:600.7px;top:844.8px;width:66.7px;height:21.6px;background:#e6faea;border:1px solid #b8efc3;border-radius:6px;box-sizing:border-box"></div>
<svg style="position:absolute;left:607.8px;top:848.6px" width="13.2" height="13.2" viewBox="0 0 24 24" fill="none" stroke="#2b6e38" stroke-width="2.2" stroke-linecap="round" stroke-linejoin="round" color="#2b6e38" ><path d="M20 6 9 17l-5-5"/></svg>
<svg style="position:absolute;left:1248.5px;top:849px" width="14" height="14" viewBox="0 0 14 14" fill="none" stroke="#d6455f" stroke-width="1.25"><rect x="0.9" y="0.9" width="12.2" height="12.2" rx="3.4"/><circle cx="7" cy="7" r="2.9"/><circle cx="10.5" cy="3.4" r="0.45" fill="#d6455f" stroke="none"/></svg>
<svg style="position:absolute;left:1267.5px;top:848px" width="16" height="16" viewBox="0 0 24 24"><circle cx="12" cy="12" r="12" fill="#3b77e8"/><path fill="#fff" d="M13.5 24V15.2h2.9l.45-3.4H13.5V9.7c0-1 .3-1.65 1.7-1.65h1.8V5.05c-.3-.05-1.4-.14-2.6-.14-2.6 0-4.4 1.6-4.4 4.5v2.4H7.1v3.4H10V24z"/></svg>
<svg style="position:absolute;left:1288.5px;top:849px" width="14" height="14" viewBox="0 0 14 14"><rect width="14" height="14" rx="2.2" fill="#000"/><path d="M3.2 3 L6.3 7.2 L3.1 11 H3.9 L6.7 7.7 L9.1 11 H11.1 L7.8 6.5 L10.8 3 H10 L7.4 6 L5.2 3 Z M4.3 3.5 H5 L10 10.5 H9.3 Z" fill="#fff" fill-rule="evenodd"/></svg>
<svg style="position:absolute;left:1308.5px;top:849px" width="14" height="14" viewBox="0 0 14 14"><rect width="14" height="14" rx="1.2" fill="#3674b5"/><rect x="2.3" y="5.3" width="2" height="6.3" fill="#fff"/><circle cx="3.3" cy="3.3" r="1.15" fill="#fff"/><path d="M5.8 5.3 H7.7 V6.2 C8.1 5.5 8.9 5.15 9.8 5.15 C11.3 5.15 12 6.1 12 7.8 V11.6 H10 V8.2 C10 7.3 9.7 6.9 9 6.9 C8.2 6.9 7.8 7.5 7.8 8.3 V11.6 H5.8 Z" fill="#fff"/></svg>
<svg style="position:absolute;left:1328.5px;top:849px" width="14" height="14" viewBox="0 0 14 14"><rect width="14" height="14" rx="1.2" fill="#3674b5"/><rect x="2.3" y="5.3" width="2" height="6.3" fill="#fff"/><circle cx="3.3" cy="3.3" r="1.15" fill="#fff"/><path d="M5.8 5.3 H7.7 V6.2 C8.1 5.5 8.9 5.15 9.8 5.15 C11.3 5.15 12 6.1 12 7.8 V11.6 H10 V8.2 C10 7.3 9.7 6.9 9 6.9 C8.2 6.9 7.8 7.5 7.8 8.3 V11.6 H5.8 Z" fill="#fff"/></svg>
<div style="position:absolute;left:288px;top:971px;width:1098px;height:1px;background:#e5e5e5"></div>
<div style="position:absolute;left:543.5px;top:917.2px;width:32px;height:32px;background:#f4f4f4;border-radius:8px;box-shadow:0 1px 2px rgba(0,0,0,.06)"></div>
<div style="position:absolute;left:558.05px;top:926.9499999999999px;width:2.7px;height:2.7px;border-radius:50%;background:#111"></div>
<div style="position:absolute;left:558.05px;top:931.75px;width:2.7px;height:2.7px;border-radius:50%;background:#111"></div>
<div style="position:absolute;left:558.05px;top:936.4499999999999px;width:2.7px;height:2.7px;border-radius:50%;background:#111"></div>
<div style="position:absolute;left:600.7px;top:921.8px;width:66.7px;height:21.6px;background:#e6faea;border:1px solid #b8efc3;border-radius:6px;box-sizing:border-box"></div>
<svg style="position:absolute;left:607.8px;top:925.6px" width="13.2" height="13.2" viewBox="0 0 24 24" fill="none" stroke="#2b6e38" stroke-width="2.2" stroke-linecap="round" stroke-linejoin="round" color="#2b6e38" ><path d="M20 6 9 17l-5-5"/></svg>
<svg style="position:absolute;left:1248.5px;top:926px" width="14" height="14" viewBox="0 0 14 14" fill="none" stroke="#d6455f" stroke-width="1.25"><rect x="0.9" y="0.9" width="12.2" height="12.2" rx="3.4"/><circle cx="7" cy="7" r="2.9"/><circle cx="10.5" cy="3.4" r="0.45" fill="#d6455f" stroke="none"/></svg>
<svg style="position:absolute;left:1267.5px;top:925px" width="16" height="16" viewBox="0 0 24 24"><circle cx="12" cy="12" r="12" fill="#3b77e8"/><path fill="#fff" d="M13.5 24V15.2h2.9l.45-3.4H13.5V9.7c0-1 .3-1.65 1.7-1.65h1.8V5.05c-.3-.05-1.4-.14-2.6-.14-2.6 0-4.4 1.6-4.4 4.5v2.4H7.1v3.4H10V24z"/></svg>
<svg style="position:absolute;left:1288.5px;top:926px" width="14" height="14" viewBox="0 0 14 14"><rect width="14" height="14" rx="2.2" fill="#000"/><path d="M3.2 3 L6.3 7.2 L3.1 11 H3.9 L6.7 7.7 L9.1 11 H11.1 L7.8 6.5 L10.8 3 H10 L7.4 6 L5.2 3 Z M4.3 3.5 H5 L10 10.5 H9.3 Z" fill="#fff" fill-rule="evenodd"/></svg>
<svg style="position:absolute;left:1308.5px;top:926px" width="14" height="14" viewBox="0 0 14 14"><rect width="14" height="14" rx="1.2" fill="#3674b5"/><rect x="2.3" y="5.3" width="2" height="6.3" fill="#fff"/><circle cx="3.3" cy="3.3" r="1.15" fill="#fff"/><path d="M5.8 5.3 H7.7 V6.2 C8.1 5.5 8.9 5.15 9.8 5.15 C11.3 5.15 12 6.1 12 7.8 V11.6 H10 V8.2 C10 7.3 9.7 6.9 9 6.9 C8.2 6.9 7.8 7.5 7.8 8.3 V11.6 H5.8 Z" fill="#fff"/></svg>
<svg style="position:absolute;left:1328.5px;top:926px" width="14" height="14" viewBox="0 0 14 14"><rect width="14" height="14" rx="1.2" fill="#3674b5"/><rect x="2.3" y="5.3" width="2" height="6.3" fill="#fff"/><circle cx="3.3" cy="3.3" r="1.15" fill="#fff"/><path d="M5.8 5.3 H7.7 V6.2 C8.1 5.5 8.9 5.15 9.8 5.15 C11.3 5.15 12 6.1 12 7.8 V11.6 H10 V8.2 C10 7.3 9.7 6.9 9 6.9 C8.2 6.9 7.8 7.5 7.8 8.3 V11.6 H5.8 Z" fill="#fff"/></svg>
<div style="position:absolute;left:288px;top:1048px;width:1098px;height:1px;background:#e5e5e5"></div>
<div style="position:absolute;left:543.5px;top:994.2px;width:32px;height:32px;background:#f4f4f4;border-radius:8px;box-shadow:0 1px 2px rgba(0,0,0,.06)"></div>
<div style="position:absolute;left:558.05px;top:1003.9499999999999px;width:2.7px;height:2.7px;border-radius:50%;background:#111"></div>
<div style="position:absolute;left:558.05px;top:1008.75px;width:2.7px;height:2.7px;border-radius:50%;background:#111"></div>
<div style="position:absolute;left:558.05px;top:1013.4499999999999px;width:2.7px;height:2.7px;border-radius:50%;background:#111"></div>
<div style="position:absolute;left:600.7px;top:998.8px;width:93.7px;height:21.6px;background:#e6faea;border:1px solid #b8efc3;border-radius:6px;box-sizing:border-box"></div>
<svg style="position:absolute;left:607.8px;top:1002.6px" width="13.2" height="13.2" viewBox="0 0 24 24" fill="none" stroke="#2b6e38" stroke-width="2.2" stroke-linecap="round" stroke-linejoin="round" color="#2b6e38" ><path d="M20 6 9 17l-5-5"/></svg>
<svg style="position:absolute;left:1248.5px;top:1003px" width="14" height="14" viewBox="0 0 14 14" fill="none" stroke="#d6455f" stroke-width="1.25"><rect x="0.9" y="0.9" width="12.2" height="12.2" rx="3.4"/><circle cx="7" cy="7" r="2.9"/><circle cx="10.5" cy="3.4" r="0.45" fill="#d6455f" stroke="none"/></svg>
<svg style="position:absolute;left:1267.5px;top:1002px" width="16" height="16" viewBox="0 0 24 24"><circle cx="12" cy="12" r="12" fill="#3b77e8"/><path fill="#fff" d="M13.5 24V15.2h2.9l.45-3.4H13.5V9.7c0-1 .3-1.65 1.7-1.65h1.8V5.05c-.3-.05-1.4-.14-2.6-.14-2.6 0-4.4 1.6-4.4 4.5v2.4H7.1v3.4H10V24z"/></svg>
<svg style="position:absolute;left:1288.5px;top:1003px" width="14" height="14" viewBox="0 0 14 14"><rect width="14" height="14" rx="2.2" fill="#000"/><path d="M3.2 3 L6.3 7.2 L3.1 11 H3.9 L6.7 7.7 L9.1 11 H11.1 L7.8 6.5 L10.8 3 H10 L7.4 6 L5.2 3 Z M4.3 3.5 H5 L10 10.5 H9.3 Z" fill="#fff" fill-rule="evenodd"/></svg>
<svg style="position:absolute;left:1308.5px;top:1003px" width="14" height="14" viewBox="0 0 14 14"><rect width="14" height="14" rx="1.2" fill="#3674b5"/><rect x="2.3" y="5.3" width="2" height="6.3" fill="#fff"/><circle cx="3.3" cy="3.3" r="1.15" fill="#fff"/><path d="M5.8 5.3 H7.7 V6.2 C8.1 5.5 8.9 5.15 9.8 5.15 C11.3 5.15 12 6.1 12 7.8 V11.6 H10 V8.2 C10 7.3 9.7 6.9 9 6.9 C8.2 6.9 7.8 7.5 7.8 8.3 V11.6 H5.8 Z" fill="#fff"/></svg>
<svg style="position:absolute;left:1328.5px;top:1003px" width="14" height="14" viewBox="0 0 14 14"><rect width="14" height="14" rx="1.2" fill="#3674b5"/><rect x="2.3" y="5.3" width="2" height="6.3" fill="#fff"/><circle cx="3.3" cy="3.3" r="1.15" fill="#fff"/><path d="M5.8 5.3 H7.7 V6.2 C8.1 5.5 8.9 5.15 9.8 5.15 C11.3 5.15 12 6.1 12 7.8 V11.6 H10 V8.2 C10 7.3 9.7 6.9 9 6.9 C8.2 6.9 7.8 7.5 7.8 8.3 V11.6 H5.8 Z" fill="#fff"/></svg>
<div style="position:absolute;left:288px;top:1125px;width:1098px;height:1px;background:#e5e5e5"></div>
<div style="position:absolute;left:543.5px;top:1071.2px;width:32px;height:32px;background:#f4f4f4;border-radius:8px;box-shadow:0 1px 2px rgba(0,0,0,.06)"></div>
<div style="position:absolute;left:558.05px;top:1080.95px;width:2.7px;height:2.7px;border-radius:50%;background:#111"></div>
<div style="position:absolute;left:558.05px;top:1085.75px;width:2.7px;height:2.7px;border-radius:50%;background:#111"></div>
<div style="position:absolute;left:558.05px;top:1090.45px;width:2.7px;height:2.7px;border-radius:50%;background:#111"></div>
<div style="position:absolute;left:600.7px;top:1075.8px;width:93.7px;height:21.6px;background:#e6faea;border:1px solid #b8efc3;border-radius:6px;box-sizing:border-box"></div>
<svg style="position:absolute;left:607.8px;top:1079.6px" width="13.2" height="13.2" viewBox="0 0 24 24" fill="none" stroke="#2b6e38" stroke-width="2.2" stroke-linecap="round" stroke-linejoin="round" color="#2b6e38" ><path d="M20 6 9 17l-5-5"/></svg>
<svg style="position:absolute;left:1258.5px;top:1080px" width="14" height="14" viewBox="0 0 14 14" fill="none" stroke="#d6455f" stroke-width="1.25"><rect x="0.9" y="0.9" width="12.2" height="12.2" rx="3.4"/><circle cx="7" cy="7" r="2.9"/><circle cx="10.5" cy="3.4" r="0.45" fill="#d6455f" stroke="none"/></svg>
<svg style="position:absolute;left:1277.5px;top:1079px" width="16" height="16" viewBox="0 0 24 24"><circle cx="12" cy="12" r="12" fill="#3b77e8"/><path fill="#fff" d="M13.5 24V15.2h2.9l.45-3.4H13.5V9.7c0-1 .3-1.65 1.7-1.65h1.8V5.05c-.3-.05-1.4-.14-2.6-.14-2.6 0-4.4 1.6-4.4 4.5v2.4H7.1v3.4H10V24z"/></svg>
<svg style="position:absolute;left:1298.5px;top:1080px" width="14" height="14" viewBox="0 0 14 14"><rect width="14" height="14" rx="2.2" fill="#000"/><path d="M3.2 3 L6.3 7.2 L3.1 11 H3.9 L6.7 7.7 L9.1 11 H11.1 L7.8 6.5 L10.8 3 H10 L7.4 6 L5.2 3 Z M4.3 3.5 H5 L10 10.5 H9.3 Z" fill="#fff" fill-rule="evenodd"/></svg>
<svg style="position:absolute;left:1318.5px;top:1080px" width="14" height="14" viewBox="0 0 14 14"><rect width="14" height="14" rx="1.2" fill="#3674b5"/><rect x="2.3" y="5.3" width="2" height="6.3" fill="#fff"/><circle cx="3.3" cy="3.3" r="1.15" fill="#fff"/><path d="M5.8 5.3 H7.7 V6.2 C8.1 5.5 8.9 5.15 9.8 5.15 C11.3 5.15 12 6.1 12 7.8 V11.6 H10 V8.2 C10 7.3 9.7 6.9 9 6.9 C8.2 6.9 7.8 7.5 7.8 8.3 V11.6 H5.8 Z" fill="#fff"/></svg>
<div style="position:absolute;left:543.5px;top:1148.2px;width:32px;height:32px;background:#f4f4f4;border-radius:8px;box-shadow:0 1px 2px rgba(0,0,0,.06)"></div>
<div style="position:absolute;left:558.05px;top:1157.95px;width:2.7px;height:2.7px;border-radius:50%;background:#111"></div>
<div style="position:absolute;left:558.05px;top:1162.75px;width:2.7px;height:2.7px;border-radius:50%;background:#111"></div>
<div style="position:absolute;left:558.05px;top:1167.45px;width:2.7px;height:2.7px;border-radius:50%;background:#111"></div>
<div style="position:absolute;left:600.7px;top:1152.8px;width:93.7px;height:21.6px;background:#e6faea;border:1px solid #b8efc3;border-radius:6px;box-sizing:border-box"></div>
<svg style="position:absolute;left:607.8px;top:1156.6px" width="13.2" height="13.2" viewBox="0 0 24 24" fill="none" stroke="#2b6e38" stroke-width="2.2" stroke-linecap="round" stroke-linejoin="round" color="#2b6e38" ><path d="M20 6 9 17l-5-5"/></svg>
<svg style="position:absolute;left:1268.5px;top:1157px" width="14" height="14" viewBox="0 0 14 14" fill="none" stroke="#d6455f" stroke-width="1.25"><rect x="0.9" y="0.9" width="12.2" height="12.2" rx="3.4"/><circle cx="7" cy="7" r="2.9"/><circle cx="10.5" cy="3.4" r="0.45" fill="#d6455f" stroke="none"/></svg>
<svg style="position:absolute;left:1288.5px;top:1157px" width="14" height="14" viewBox="0 0 14 14"><rect width="14" height="14" rx="2.2" fill="#000"/><path d="M3.2 3 L6.3 7.2 L3.1 11 H3.9 L6.7 7.7 L9.1 11 H11.1 L7.8 6.5 L10.8 3 H10 L7.4 6 L5.2 3 Z M4.3 3.5 H5 L10 10.5 H9.3 Z" fill="#fff" fill-rule="evenodd"/></svg>
<svg style="position:absolute;left:1308.5px;top:1157px" width="14" height="14" viewBox="0 0 14 14"><rect width="14" height="14" rx="1.2" fill="#3674b5"/><rect x="2.3" y="5.3" width="2" height="6.3" fill="#fff"/><circle cx="3.3" cy="3.3" r="1.15" fill="#fff"/><path d="M5.8 5.3 H7.7 V6.2 C8.1 5.5 8.9 5.15 9.8 5.15 C11.3 5.15 12 6.1 12 7.8 V11.6 H10 V8.2 C10 7.3 9.7 6.9 9 6.9 C8.2 6.9 7.8 7.5 7.8 8.3 V11.6 H5.8 Z" fill="#fff"/></svg>
<div class="t" style="left:48.00px;top:18.03px;font-size:19.25px;line-height:19.25px;font-weight:400;color:#0a0a0a;letter-spacing:-0.250px;-webkit-text-stroke:0.15px #0a0a0a">apaya</div>
<div class="t" style="left:47.80px;top:79.16px;font-size:14.6px;line-height:14.6px;font-weight:400;color:#525252;letter-spacing:0.167px;-webkit-text-stroke:0.18px #525252">Home</div>
<div class="t" style="left:48.30px;top:132.16px;font-size:14.6px;line-height:14.6px;font-weight:400;color:#525252;letter-spacing:0.012px;-webkit-text-stroke:0.18px #525252">Campaigns</div>
<div class="t" style="left:47.80px;top:172.16px;font-size:14.6px;line-height:14.6px;font-weight:400;color:#525252;letter-spacing:0.100px;-webkit-text-stroke:0.18px #525252">Posts</div>
<div class="t" style="left:48.30px;top:212.16px;font-size:14.6px;line-height:14.6px;font-weight:400;color:#525252;letter-spacing:0.114px;-webkit-text-stroke:0.18px #525252">Schedule</div>
<div class="t" style="left:48.30px;top:252.16px;font-size:14.6px;line-height:14.6px;font-weight:700;color:#171717;letter-spacing:-0.287px">Analytics</div>
<div class="t" style="left:47.80px;top:305.16px;font-size:14.6px;line-height:14.6px;font-weight:400;color:#525252;letter-spacing:0.075px;-webkit-text-stroke:0.18px #525252">Framework</div>
<div class="t" style="left:48.80px;top:345.16px;font-size:14.6px;line-height:14.6px;font-weight:400;color:#525252;letter-spacing:0.240px;-webkit-text-stroke:0.18px #525252">Topics</div>
<div class="t" style="left:47.80px;top:385.16px;font-size:14.6px;line-height:14.6px;font-weight:400;color:#525252;letter-spacing:0.414px;-webkit-text-stroke:0.18px #525252">Identity</div>
<div class="t" style="left:48.30px;top:425.16px;font-size:14.6px;line-height:14.6px;font-weight:400;color:#525252;letter-spacing:0.060px;-webkit-text-stroke:0.18px #525252">Colors</div>
<div class="t" style="left:48.80px;top:465.16px;font-size:14.6px;line-height:14.6px;font-weight:400;color:#525252;letter-spacing:-0.040px;-webkit-text-stroke:0.18px #525252">Assets</div>
<div class="t" style="left:48.80px;top:505.16px;font-size:14.6px;line-height:14.6px;font-weight:400;color:#525252;letter-spacing:0.075px;-webkit-text-stroke:0.18px #525252">Templates</div>
<div class="t" style="left:48.30px;top:545.16px;font-size:14.6px;line-height:14.6px;font-weight:400;color:#525252;letter-spacing:0.180px;-webkit-text-stroke:0.18px #525252">Connections</div>
<div class="t" style="left:48.30px;top:585.16px;font-size:14.6px;line-height:14.6px;font-weight:400;color:#525252;letter-spacing:-0.046px;-webkit-text-stroke:0.18px #525252">Social Scanner</div>
<div class="t" style="left:1246.00px;top:21.66px;font-size:15.2px;line-height:15.2px;font-weight:400;color:#0a0a0a;letter-spacing:-0.286px;-webkit-text-stroke:0.12px #0a0a0a">Kokotree</div>
<div class="t" style="left:288.00px;top:84.26px;font-size:24.5px;line-height:24.5px;font-weight:700;color:#0a0a0a;letter-spacing:-1.137px">Analytics</div>
<div class="t" style="left:1259.20px;top:88.73px;font-size:15.0px;line-height:15.0px;font-weight:400;color:#0a0a0a;letter-spacing:-0.517px;-webkit-text-stroke:0.18px #0a0a0a">30 Days</div>
<div class="t" style="left:313.60px;top:171.84px;font-size:14.45px;line-height:14.45px;font-weight:400;color:#0a0a0a;letter-spacing:0.020px;-webkit-text-stroke:0.18px #0a0a0a">Total Reach</div>
<div class="t" style="left:575.60px;top:169.97px;font-size:18.5px;line-height:18.5px;font-weight:400;color:#4cc463;letter-spacing:-0.100px;-webkit-text-stroke:0.18px #4cc463">+0%</div>
<div class="t" style="left:312.60px;top:203.43px;font-size:24.7px;line-height:24.7px;font-weight:700;color:#0a0a0a;letter-spacing:-0.250px">79.7K</div>
<div class="t" style="left:313.10px;top:234.10px;font-size:13.9px;line-height:13.9px;font-weight:400;color:#737373;letter-spacing:0.380px;-webkit-text-stroke:0.18px #737373">accounts reached</div>
<div class="t" style="left:687.60px;top:171.84px;font-size:14.45px;line-height:14.45px;font-weight:400;color:#0a0a0a;letter-spacing:0.100px;-webkit-text-stroke:0.18px #0a0a0a">Total Engagement</div>
<div class="t" style="left:949.60px;top:169.97px;font-size:18.5px;line-height:18.5px;font-weight:400;color:#4cc463;letter-spacing:-0.100px;-webkit-text-stroke:0.18px #4cc463">+0%</div>
<div class="t" style="left:687.10px;top:203.43px;font-size:24.7px;line-height:24.7px;font-weight:700;color:#0a0a0a;letter-spacing:0.083px">2.8K</div>
<div class="t" style="left:687.10px;top:234.10px;font-size:13.9px;line-height:13.9px;font-weight:400;color:#737373;letter-spacing:0.380px;-webkit-text-stroke:0.18px #737373">accounts engaged</div>
<div class="t" style="left:1061.60px;top:171.84px;font-size:14.45px;line-height:14.45px;font-weight:400;color:#0a0a0a;letter-spacing:0.136px;-webkit-text-stroke:0.18px #0a0a0a">Total Clicks</div>
<div class="t" style="left:1323.60px;top:169.97px;font-size:18.5px;line-height:18.5px;font-weight:400;color:#4cc463;letter-spacing:-0.100px;-webkit-text-stroke:0.18px #4cc463">+0%</div>
<div class="t" style="left:1060.60px;top:203.43px;font-size:24.7px;line-height:24.7px;font-weight:700;color:#0a0a0a;letter-spacing:-2.050px">711</div>
<div class="t" style="left:1061.10px;top:234.10px;font-size:13.9px;line-height:13.9px;font-weight:400;color:#737373;letter-spacing:0.396px;-webkit-text-stroke:0.18px #737373">profile clicks</div>
<div class="t" style="left:312.70px;top:399.70px;font-size:14.6px;line-height:14.6px;font-weight:400;color:#0a0a0a;letter-spacing:0.016px;-webkit-text-stroke:0.18px #0a0a0a">Engagement Over Time</div>
<div class="t" style="left:313.20px;top:426.98px;font-size:25px;line-height:25px;font-weight:700;color:#0a0a0a;letter-spacing:-0.233px">2.8K</div>
<div class="t" style="left:313.70px;top:457.68px;font-size:14.5px;line-height:14.5px;font-weight:400;color:#737373;letter-spacing:-0.084px;-webkit-text-stroke:0.18px #737373">Total Engagement Over Time</div>
<div class="t" style="left:873.50px;top:399.76px;font-size:14.6px;line-height:14.6px;font-weight:400;color:#0a0a0a;letter-spacing:0.162px;-webkit-text-stroke:0.18px #0a0a0a">Performance Metrics Comparison</div>
<div class="t" style="left:893.60px;top:426.04px;font-size:14.0px;line-height:14.0px;font-weight:400;color:#707070;letter-spacing:0.000px;-webkit-text-stroke:0.18px #707070">Reach</div>
<div class="t" style="left:969.80px;top:426.04px;font-size:14.0px;line-height:14.0px;font-weight:400;color:#707070;letter-spacing:0.167px;-webkit-text-stroke:0.18px #707070">Engagement</div>
<div class="t" style="left:1087.35px;top:426.04px;font-size:14.0px;line-height:14.0px;font-weight:400;color:#707070;letter-spacing:0.220px;-webkit-text-stroke:0.18px #707070">Clicks</div>
<div class="t" style="left:362.80px;top:650.71px;font-size:12.3px;line-height:12.3px;font-weight:400;color:#94a3b8;letter-spacing:0.000px;-webkit-text-stroke:0.18px #94a3b8">0</div>
<div class="t" style="left:355.80px;top:610.71px;font-size:12.3px;line-height:12.3px;font-weight:400;color:#94a3b8;letter-spacing:0.000px;-webkit-text-stroke:0.18px #94a3b8">25</div>
<div class="t" style="left:355.80px;top:570.71px;font-size:12.3px;line-height:12.3px;font-weight:400;color:#94a3b8;letter-spacing:0.000px;-webkit-text-stroke:0.18px #94a3b8">50</div>
<div class="t" style="left:355.80px;top:530.71px;font-size:12.3px;line-height:12.3px;font-weight:400;color:#94a3b8;letter-spacing:0.000px;-webkit-text-stroke:0.18px #94a3b8">75</div>
<div class="t" style="left:348.80px;top:494.71px;font-size:12.3px;line-height:12.3px;font-weight:400;color:#94a3b8;letter-spacing:0.000px;-webkit-text-stroke:0.18px #94a3b8">100</div>
<div class="t" style="left:379.59px;top:662.61px;font-size:12.3px;line-height:12.3px;font-weight:400;color:#94a3b8;letter-spacing:0.400px;-webkit-text-stroke:0.18px #94a3b8">Oct 20</div>
<div class="t" style="left:435.22px;top:662.61px;font-size:12.3px;line-height:12.3px;font-weight:400;color:#94a3b8;letter-spacing:0.380px;-webkit-text-stroke:0.18px #94a3b8">Oct 24</div>
<div class="t" style="left:490.80px;top:662.61px;font-size:12.3px;line-height:12.3px;font-weight:400;color:#94a3b8;letter-spacing:0.380px;-webkit-text-stroke:0.18px #94a3b8">Oct 28</div>
<div class="t" style="left:545.73px;top:662.61px;font-size:12.3px;line-height:12.3px;font-weight:400;color:#94a3b8;letter-spacing:0.140px;-webkit-text-stroke:0.18px #94a3b8">Nov 01</div>
<div class="t" style="left:601.01px;top:662.61px;font-size:12.3px;line-height:12.3px;font-weight:400;color:#94a3b8;letter-spacing:0.160px;-webkit-text-stroke:0.18px #94a3b8">Nov 05</div>
<div class="t" style="left:656.49px;top:662.61px;font-size:12.3px;line-height:12.3px;font-weight:400;color:#94a3b8;letter-spacing:0.300px;-webkit-text-stroke:0.18px #94a3b8">Nov 09</div>
<div class="t" style="left:713.02px;top:662.61px;font-size:12.3px;line-height:12.3px;font-weight:400;color:#94a3b8;letter-spacing:-0.080px;-webkit-text-stroke:0.18px #94a3b8">Nov 13</div>
<div class="t" style="left:762.05px;top:662.61px;font-size:12.3px;line-height:12.3px;font-weight:400;color:#94a3b8;letter-spacing:-0.240px;-webkit-text-stroke:0.18px #94a3b8">Nov 17</div>
<div class="t" style="left:923.80px;top:618.71px;font-size:12.3px;line-height:12.3px;font-weight:400;color:#94a3b8;letter-spacing:0.000px;-webkit-text-stroke:0.18px #94a3b8">0</div>
<div class="t" style="left:909.80px;top:578.71px;font-size:12.3px;line-height:12.3px;font-weight:400;color:#94a3b8;letter-spacing:0.000px;-webkit-text-stroke:0.18px #94a3b8">800</div>
<div class="t" style="left:903.30px;top:538.71px;font-size:12.3px;line-height:12.3px;font-weight:400;color:#94a3b8;letter-spacing:0.000px;-webkit-text-stroke:0.18px #94a3b8">1600</div>
<div class="t" style="left:903.30px;top:498.71px;font-size:12.3px;line-height:12.3px;font-weight:400;color:#94a3b8;letter-spacing:0.000px;-webkit-text-stroke:0.18px #94a3b8">2400</div>
<div class="t" style="left:903.30px;top:462.71px;font-size:12.3px;line-height:12.3px;font-weight:400;color:#94a3b8;letter-spacing:0.000px;-webkit-text-stroke:0.18px #94a3b8">3200</div>
<div class="t" style="left:940.59px;top:630.61px;font-size:12.3px;line-height:12.3px;font-weight:400;color:#94a3b8;letter-spacing:0.400px;-webkit-text-stroke:0.18px #94a3b8">Oct 20</div>
<div class="t" style="left:996.19px;top:630.61px;font-size:12.3px;line-height:12.3px;font-weight:400;color:#94a3b8;letter-spacing:0.380px;-webkit-text-stroke:0.18px #94a3b8">Oct 24</div>
<div class="t" style="left:1051.75px;top:630.61px;font-size:12.3px;line-height:12.3px;font-weight:400;color:#94a3b8;letter-spacing:0.380px;-webkit-text-stroke:0.18px #94a3b8">Oct 28</div>
<div class="t" style="left:1106.67px;top:630.61px;font-size:12.3px;line-height:12.3px;font-weight:400;color:#94a3b8;letter-spacing:0.140px;-webkit-text-stroke:0.18px #94a3b8">Nov 01</div>
<div class="t" style="left:1161.92px;top:630.61px;font-size:12.3px;line-height:12.3px;font-weight:400;color:#94a3b8;letter-spacing:0.160px;-webkit-text-stroke:0.18px #94a3b8">Nov 05</div>
<div class="t" style="left:1217.38px;top:630.61px;font-size:12.3px;line-height:12.3px;font-weight:400;color:#94a3b8;letter-spacing:0.300px;-webkit-text-stroke:0.18px #94a3b8">Nov 09</div>
<div class="t" style="left:1273.90px;top:630.61px;font-size:12.3px;line-height:12.3px;font-weight:400;color:#94a3b8;letter-spacing:-0.080px;-webkit-text-stroke:0.18px #94a3b8">Nov 13</div>
<div class="t" style="left:1322.90px;top:630.61px;font-size:12.3px;line-height:12.3px;font-weight:400;color:#94a3b8;letter-spacing:-0.240px;-webkit-text-stroke:0.18px #94a3b8">Nov 17</div>
<div class="t" style="left:288.00px;top:746.71px;font-size:14.6px;line-height:14.6px;font-weight:700;color:#0a0a0a;letter-spacing:-0.074px">Campaign Performance</div>
<div class="t" style="left:1189.40px;top:747.65px;font-size:13.2px;line-height:13.2px;font-weight:400;color:#0a0a0a;letter-spacing:-0.044px;-webkit-text-stroke:0.35px #0a0a0a">Status (2)</div>
<div class="t" style="left:1274.50px;top:747.65px;font-size:13.2px;line-height:13.2px;font-weight:400;color:#0a0a0a;letter-spacing:-0.229px;-webkit-text-stroke:0.35px #0a0a0a">Create Campaign</div>
<div class="t" style="left:304.00px;top:791.54px;font-size:12.1px;line-height:12.1px;font-weight:700;color:#a3a3a3;letter-spacing:0.071px">CAMPAIGN</div>
<div class="t" style="left:603.70px;top:791.54px;font-size:12.1px;line-height:12.1px;font-weight:700;color:#a3a3a3;letter-spacing:0.150px">STATUS</div>
<div class="t" style="left:808.00px;top:791.54px;font-size:12.1px;line-height:12.1px;font-weight:700;color:#a3a3a3;letter-spacing:-0.300px">REACH</div>
<div class="t" style="left:944.60px;top:791.54px;font-size:12.1px;line-height:12.1px;font-weight:700;color:#a3a3a3;letter-spacing:-0.222px">ENGAGEMENT</div>
<div class="t" style="left:1123.55px;top:791.54px;font-size:12.1px;line-height:12.1px;font-weight:700;color:#a3a3a3;letter-spacing:-0.160px">CLICKS</div>
<div class="t" style="left:1260.50px;top:791.54px;font-size:12.1px;line-height:12.1px;font-weight:700;color:#a3a3a3;letter-spacing:-0.037px">PLATFORMS</div>
<div class="t" style="left:300.70px;top:848.26px;font-size:16.4px;line-height:16.4px;font-weight:700;color:#171717;letter-spacing:-0.250px">Testing</div>
<div class="t" style="left:626.30px;top:849.76px;font-size:12.3px;line-height:12.3px;font-weight:400;color:#2b6e38;letter-spacing:0.180px;-webkit-text-stroke:0.12px #2b6e38">Active</div>
<div class="t" style="left:814.40px;top:836.78px;font-size:14.7px;line-height:14.7px;font-weight:700;color:#0a0a0a;letter-spacing:0.000px">182</div>
<div class="t" style="left:798.97px;top:856.46px;font-size:12.2px;line-height:12.2px;font-weight:400;color:#3ba34b;letter-spacing:0.420px;-webkit-text-stroke:0.18px #3ba34b">3.3% rate</div>
<div class="t" style="left:980.65px;top:836.78px;font-size:14.7px;line-height:14.7px;font-weight:700;color:#0a0a0a;letter-spacing:0.000px">6</div>
<div class="t" style="left:932.21px;top:856.46px;font-size:12.2px;line-height:12.2px;font-weight:400;color:#3ba34b;letter-spacing:0.420px;-webkit-text-stroke:0.18px #3ba34b">3.3% engagement</div>
<div class="t" style="left:1141.10px;top:844.28px;font-size:14.7px;line-height:14.7px;font-weight:700;color:#0a0a0a;letter-spacing:0.000px">-</div>
<div class="t" style="left:299.70px;top:925.26px;font-size:16.4px;line-height:16.4px;font-weight:700;color:#171717;letter-spacing:-0.200px">Nov 5</div>
<div class="t" style="left:626.30px;top:926.76px;font-size:12.3px;line-height:12.3px;font-weight:400;color:#2b6e38;letter-spacing:0.180px;-webkit-text-stroke:0.12px #2b6e38">Active</div>
<div class="t" style="left:814.40px;top:913.78px;font-size:14.7px;line-height:14.7px;font-weight:700;color:#0a0a0a;letter-spacing:0.000px">791</div>
<div class="t" style="left:798.97px;top:933.46px;font-size:12.2px;line-height:12.2px;font-weight:400;color:#3ba34b;letter-spacing:0.420px;-webkit-text-stroke:0.18px #3ba34b">2.1% rate</div>
<div class="t" style="left:976.40px;top:913.78px;font-size:14.7px;line-height:14.7px;font-weight:700;color:#0a0a0a;letter-spacing:0.000px">17</div>
<div class="t" style="left:932.21px;top:933.46px;font-size:12.2px;line-height:12.2px;font-weight:400;color:#3ba34b;letter-spacing:0.420px;-webkit-text-stroke:0.18px #3ba34b">2.1% engagement</div>
<div class="t" style="left:1135.35px;top:913.78px;font-size:14.7px;line-height:14.7px;font-weight:700;color:#0a0a0a;letter-spacing:0.000px">20</div>
<div class="t" style="left:1113.88px;top:933.46px;font-size:12.2px;line-height:12.2px;font-weight:400;color:#3ba34b;letter-spacing:0.420px;-webkit-text-stroke:0.18px #3ba34b">2.5% CTR</div>
<div class="t" style="left:300.70px;top:1002.26px;font-size:16.4px;line-height:16.4px;font-weight:700;color:#171717;letter-spacing:-0.258px">Test Campaign</div>
<div class="t" style="left:625.80px;top:1003.76px;font-size:12.3px;line-height:12.3px;font-weight:400;color:#2b6e38;letter-spacing:0.263px;-webkit-text-stroke:0.12px #2b6e38">Completed</div>
<div class="t" style="left:810.90px;top:990.78px;font-size:14.7px;line-height:14.7px;font-weight:700;color:#0a0a0a;letter-spacing:0.000px">1.6K</div>
<div class="t" style="left:799.22px;top:1010.46px;font-size:12.2px;line-height:12.2px;font-weight:400;color:#3ba34b;letter-spacing:0.420px;-webkit-text-stroke:0.18px #3ba34b">0.6% rate</div>
<div class="t" style="left:976.40px;top:990.78px;font-size:14.7px;line-height:14.7px;font-weight:700;color:#0a0a0a;letter-spacing:0.000px">10</div>
<div class="t" style="left:932.46px;top:1010.46px;font-size:12.2px;line-height:12.2px;font-weight:400;color:#3ba34b;letter-spacing:0.420px;-webkit-text-stroke:0.18px #3ba34b">0.6% engagement</div>
<div class="t" style="left:1135.35px;top:990.78px;font-size:14.7px;line-height:14.7px;font-weight:700;color:#0a0a0a;letter-spacing:0.000px">31</div>
<div class="t" style="left:1113.88px;top:1010.46px;font-size:12.2px;line-height:12.2px;font-weight:400;color:#3ba34b;letter-spacing:0.420px;-webkit-text-stroke:0.18px #3ba34b">2.0% CTR</div>
<div class="t" style="left:299.70px;top:1079.26px;font-size:16.4px;line-height:16.4px;font-weight:700;color:#171717;letter-spacing:0.225px">New Sept 2025</div>
<div class="t" style="left:625.80px;top:1080.76px;font-size:12.3px;line-height:12.3px;font-weight:400;color:#2b6e38;letter-spacing:0.263px;-webkit-text-stroke:0.12px #2b6e38">Completed</div>
<div class="t" style="left:806.90px;top:1067.78px;font-size:14.7px;line-height:14.7px;font-weight:700;color:#0a0a0a;letter-spacing:0.000px">19.8K</div>
<div class="t" style="left:798.97px;top:1087.46px;font-size:12.2px;line-height:12.2px;font-weight:400;color:#3ba34b;letter-spacing:0.420px;-webkit-text-stroke:0.18px #3ba34b">2.7% rate</div>
<div class="t" style="left:972.65px;top:1067.78px;font-size:14.7px;line-height:14.7px;font-weight:700;color:#0a0a0a;letter-spacing:0.000px">540</div>
<div class="t" style="left:932.21px;top:1087.46px;font-size:12.2px;line-height:12.2px;font-weight:400;color:#3ba34b;letter-spacing:0.420px;-webkit-text-stroke:0.18px #3ba34b">2.7% engagement</div>
<div class="t" style="left:1131.10px;top:1067.78px;font-size:14.7px;line-height:14.7px;font-weight:700;color:#0a0a0a;letter-spacing:0.000px">180</div>
<div class="t" style="left:1114.13px;top:1087.46px;font-size:12.2px;line-height:12.2px;font-weight:400;color:#3ba34b;letter-spacing:0.420px;-webkit-text-stroke:0.18px #3ba34b">0.9% CTR</div>
<div class="t" style="left:299.70px;top:1156.26px;font-size:16.4px;line-height:16.4px;font-weight:700;color:#171717;letter-spacing:0.000px">Ina 350px</div>
<div class="t" style="left:625.80px;top:1157.76px;font-size:12.3px;line-height:12.3px;font-weight:400;color:#2b6e38;letter-spacing:0.263px;-webkit-text-stroke:0.12px #2b6e38">Completed</div>
<div class="t" style="left:811.15px;top:1144.78px;font-size:14.7px;line-height:14.7px;font-weight:700;color:#0a0a0a;letter-spacing:0.000px">2.3K</div>
<div class="t" style="left:799.22px;top:1164.46px;font-size:12.2px;line-height:12.2px;font-weight:400;color:#3ba34b;letter-spacing:0.420px;-webkit-text-stroke:0.18px #3ba34b">0.5% rate</div>
<div class="t" style="left:976.65px;top:1144.78px;font-size:14.7px;line-height:14.7px;font-weight:700;color:#0a0a0a;letter-spacing:0.000px">30</div>
<div class="t" style="left:932.21px;top:1164.46px;font-size:12.2px;line-height:12.2px;font-weight:400;color:#3ba34b;letter-spacing:0.420px;-webkit-text-stroke:0.18px #3ba34b">1.3% engagement</div>
<div class="t" style="left:1141.10px;top:1152.28px;font-size:14.7px;line-height:14.7px;font-weight:700;color:#0a0a0a;letter-spacing:0.000px">-</div>
</div><script>(function(){var w=window.innerWidth;if(w&&Math.abs(w-2836)>2){document.getElementById('root').style.zoom=(w/1418);}})();</script></body></html>
